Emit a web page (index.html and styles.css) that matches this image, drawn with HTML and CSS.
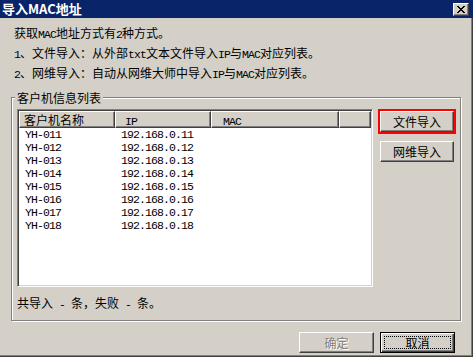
FILE: index.html
```html
<!DOCTYPE html>
<html>
<head>
<meta charset="utf-8">
<link rel="stylesheet" href="styles.css">
</head>
<body>
<div class="window">
  <div class="titlebar">
    <span class="title">导入MAC地址</span>
    <span class="close-btn"><svg width="8" height="7" viewBox="0 0 8 7" shape-rendering="crispEdges"><path fill="#000" d="M0 0h2v1H0zM6 0h2v1H6zM1 1h2v1H1zM5 1h2v1H5zM2 2h4v1H2zM3 3h2v1H3zM2 4h4v1H2zM1 5h2v1H1zM5 5h2v1H5zM0 6h2v1H0zM6 6h2v1H6z"/></svg></span>
  </div>
  <div class="client">
    <div class="intro">
      <p>获取<span class="en">MAC</span>地址方式有<span class="en">2</span>种方式。</p>
      <p><span class="en">1</span>、文件导入：从外部<span class="en">txt</span>文本文件导入<span class="en">IP</span>与<span class="en">MAC</span>对应列表。</p>
      <p><span class="en">2</span>、网维导入：自动从网维大师中导入<span class="en">IP</span>与<span class="en">MAC</span>对应列表。</p>
    </div>
    <fieldset class="group">
      <legend class="group-title">客户机信息列表</legend>
      <div class="group-main">
        <div class="listview">
          <div class="lv-head">
            <div class="hcell h1">客户机名称</div>
            <div class="hcell h2"><span class="en">IP</span></div>
            <div class="hcell h3"><span class="en">MAC</span></div>
            <div class="hcell h4"></div>
          </div>
          <div class="lv-row"><span class="cell">YH-011</span><span class="cell">192.168.0.11</span><span class="cell"></span><span class="cell"></span></div>
          <div class="lv-row"><span class="cell">YH-012</span><span class="cell">192.168.0.12</span><span class="cell"></span><span class="cell"></span></div>
          <div class="lv-row"><span class="cell">YH-013</span><span class="cell">192.168.0.13</span><span class="cell"></span><span class="cell"></span></div>
          <div class="lv-row"><span class="cell">YH-014</span><span class="cell">192.168.0.14</span><span class="cell"></span><span class="cell"></span></div>
          <div class="lv-row"><span class="cell">YH-015</span><span class="cell">192.168.0.15</span><span class="cell"></span><span class="cell"></span></div>
          <div class="lv-row"><span class="cell">YH-016</span><span class="cell">192.168.0.16</span><span class="cell"></span><span class="cell"></span></div>
          <div class="lv-row"><span class="cell">YH-017</span><span class="cell">192.168.0.17</span><span class="cell"></span><span class="cell"></span></div>
          <div class="lv-row"><span class="cell">YH-018</span><span class="cell">192.168.0.18</span><span class="cell"></span><span class="cell"></span></div>
        </div>
        <div class="side">
          <div class="highlight"><button class="btn">文件导入</button></div>
          <button class="btn side-btn">网维导入</button>
        </div>
      </div>
      <div class="status">共导入<span class="en sp"> - </span>条，失败<span class="en sp"> - </span>条。</div>
    </fieldset>
    <div class="actions">
      <button class="btn btn-disabled">确定</button>
      <button class="btn btn-default"><span class="focus">取消</span></button>
    </div>
  </div>
</div>
</body>
</html>
```

FILE: styles.css
```css
html, body {
  margin: 0;
  padding: 0;
}

body {
  width: 473px;
  height: 357px;
  overflow: hidden;
  background: #d4d0c8;
  font-family: "Noto Sans CJK SC", "Liberation Sans", sans-serif;
  font-size: 12px;
  color: #000;
}

.window {
  width: 473px;
  height: 357px;
  display: flex;
  flex-direction: column;
}

.titlebar {
  height: 18px;
  flex: none;
  background: #0a246a;
  color: #fff;
  display: flex;
  justify-content: space-between;
  align-items: flex-start;
  padding: 0 4px 0 2px;
}

.title {
  font-weight: bold;
  font-size: 13px;
  line-height: 18px;
}

.close-btn {
  box-sizing: border-box;
  width: 16px;
  height: 13px;
  margin-top: 3px;
  background: #d4d0c8;
  border: 1px solid;
  border-color: #fff #404040 #404040 #fff;
  box-shadow: inset -1px -1px 0 #808080;
  display: flex;
  align-items: center;
  justify-content: center;
}

.close-btn svg {
  display: block;
}

.client {
  flex: 1;
  box-sizing: border-box;
  border-right: 1px solid #404040;
  border-bottom: 1px solid #404040;
  box-shadow: inset -1px -1px 0 #808080;
  display: flex;
  flex-direction: column;
}

.intro {
  padding: 6px 0 0 14px;
}

.intro p {
  margin: 0;
  line-height: 18px;
  white-space: nowrap;
}

.en {
  font-family: "Liberation Mono", monospace;
  font-size: 11.5px;
  letter-spacing: -0.9px;
}

.sp {
  white-space: pre;
}

.group {
  margin: 7px 0 0 11px;
  width: 450px;
  box-sizing: border-box;
  min-inline-size: 0;
  border: 1px solid #808080;
  box-shadow: 1px 1px 0 #fff, inset 1px 1px 0 #fff;
  padding: 5px 2px 8px 5px;
}

.group-title {
  margin-left: -2px;
  padding: 0 2px;
  line-height: 13px;
  background: #d4d0c8;
}

.group-main {
  display: flex;
  gap: 5px;
  align-items: flex-start;
}

.listview {
  box-sizing: border-box;
  width: 356px;
  height: 178px;
  background: #fff;
  border: 1px solid;
  border-color: #808080 #fff #fff #808080;
  box-shadow: inset 1px 1px 0 #404040, inset -1px -1px 0 #d4d0c8;
  padding: 1px;
}

.lv-head {
  display: grid;
  grid-template-columns: 96px 96px 128px 32px;
  height: 17px;
}

.hcell {
  box-sizing: border-box;
  height: 17px;
  background: #d4d0c8;
  border: 1px solid;
  border-color: #fff #404040 #404040 #fff;
  box-shadow: inset -1px -1px 0 #808080;
  line-height: 15px;
  padding-left: 4px;
  white-space: nowrap;
}

.h2 {
  padding-left: 9px;
}

.h3 {
  padding-left: 11px;
}

.lv-row {
  display: grid;
  grid-template-columns: 96px 96px 128px 32px;
  height: 13px;
  line-height: 13px;
  font-family: "Liberation Mono", monospace;
  font-size: 11.5px;
  letter-spacing: -0.9px;
}

.cell {
  padding-left: 6px;
  white-space: nowrap;
}

.side {
  width: 78px;
  display: flex;
  flex-direction: column;
}

.highlight {
  box-sizing: border-box;
  width: 78px;
  height: 25px;
  border: 2px solid #f00;
}

.btn {
  box-sizing: border-box;
  width: 74px;
  height: 21px;
  margin: 0;
  padding: 0;
  background: #d4d0c8;
  border: 1px solid;
  border-color: #fff #404040 #404040 #fff;
  box-shadow: inset -1px -1px 0 #808080;
  font-family: "Noto Sans CJK SC", sans-serif;
  font-size: 12px;
  line-height: 17px;
  color: #000;
  display: flex;
  align-items: center;
  justify-content: center;
}

.side-btn {
  margin: 7px 0 0 2px;
}

.status {
  margin-top: 9px;
  line-height: 14px;
  white-space: nowrap;
}

.actions {
  margin-top: 11px;
  padding-right: 17px;
  display: flex;
  justify-content: flex-end;
  gap: 6px;
}

.actions .btn {
  width: 75px;
}

.btn-disabled {
  color: #808080;
  text-shadow: 1px 1px 0 #fff;
}

.btn-default {
  border: 1px solid #000;
  box-shadow: inset 1px 1px 0 #fff, inset -1px -1px 0 #404040, inset -2px -2px 0 #808080;
  padding: 3px;
}

.focus {
  flex: 1;
  align-self: stretch;
  border: 1px dotted #000;
  display: flex;
  align-items: center;
  justify-content: center;
  line-height: 11px;
}
```
